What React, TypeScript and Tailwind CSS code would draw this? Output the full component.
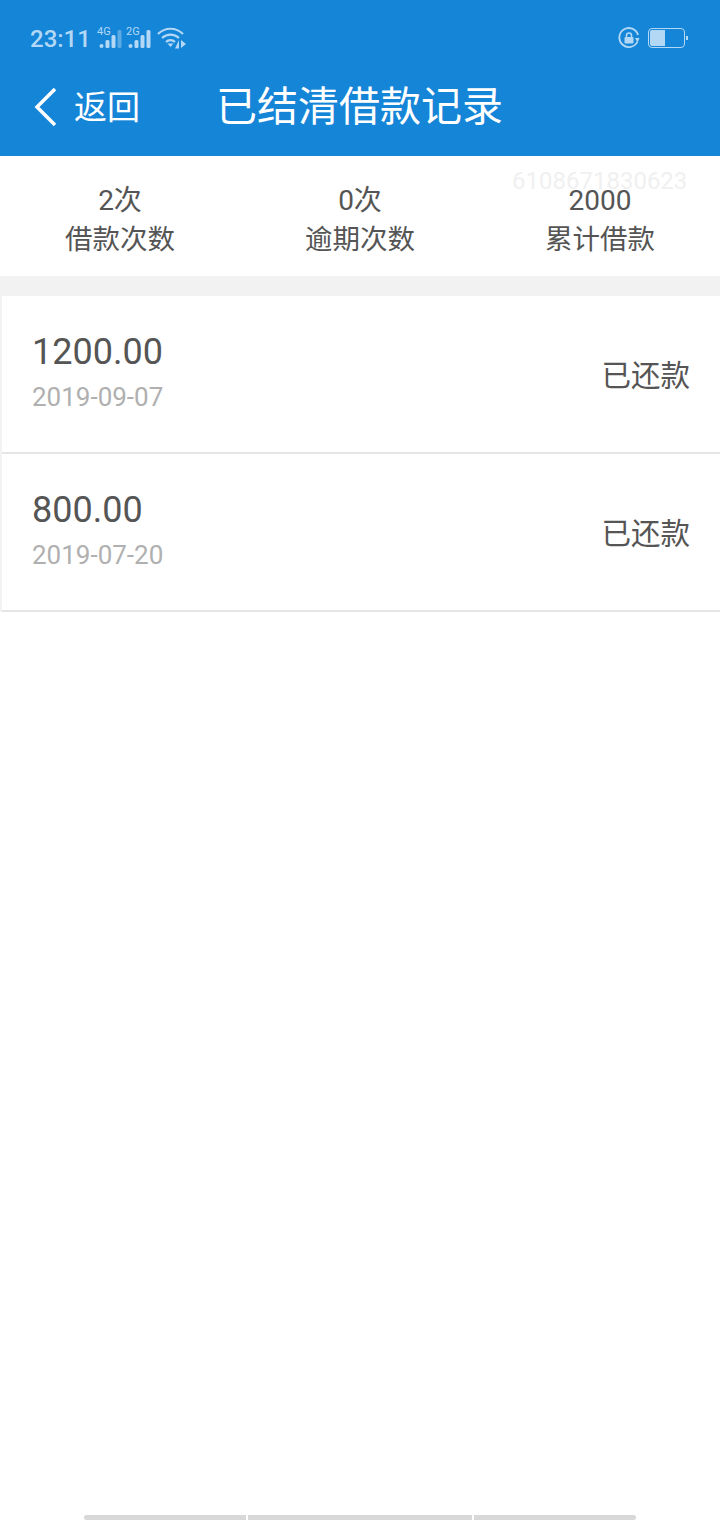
const cjk = "font-['Roboto','Noto_Sans_CJK_SC',sans-serif]";

const stats = [
  { value: '2次', label: '借款次数' },
  { value: '0次', label: '逾期次数' },
  { value: '2000', label: '累计借款' },
];

const records = [
  { amount: '1200.00', date: '2019-09-07' },
  { amount: '800.00', date: '2019-07-20' },
];

function Signal({ label, dim }: { label: string; dim?: boolean }) {
  return (
    <svg width="24" height="22" viewBox="0 0 24 22" className="overflow-visible text-[#b3d8f5]">
      <text x="-2" y="8" fontSize="11" fill="currentColor" fontFamily="Roboto, sans-serif">
        {label}
      </text>
      <circle cx="2.5" cy="19" r="2" fill="currentColor" />
      <rect x="6.5" y="13" width="4" height="8" rx="1.5" fill="currentColor" />
      <rect x="12.5" y="8" width="4" height="13" rx="1.5" fill="currentColor" />
      <rect x="18.5" y="3" width="4" height="18" rx="1.5" fill="currentColor" opacity={dim ? 0.45 : 1} />
    </svg>
  );
}

function Wifi() {
  return (
    <svg width="29" height="22" viewBox="0 0 29 22" fill="none" stroke="#b3d8f5" strokeWidth="2.2">
      <path d="M1 7 C8 0 19 0 26 7" />
      <path d="M5 11 C10 6.5 17 6.5 22 11" />
      <path d="M9 15 C11.5 12.5 15.5 12.5 18 15" />
      <path d="M10.5 16.5 L16.5 16.5 L13.5 20 Z" fill="#b3d8f5" stroke="none" />
      <path d="M22 13 L22 21.5 L18 21.5 Z" fill="#b3d8f5" stroke="none" />
      <path d="M24 13 L24 21 L29 17 Z" fill="#b3d8f5" stroke="none" />
    </svg>
  );
}

function RotationLock() {
  return (
    <svg width="22" height="22" viewBox="0 0 22 22" fill="none">
      <path d="M19.5 14.5 A9.5 9.5 0 1 1 20 8" stroke="#b3d8f5" strokeWidth="1.8" />
      <path d="M17 11 L21.5 11 L19.5 15.5 Z" fill="#b3d8f5" />
      <rect x="6.5" y="10" width="9" height="6.5" rx="1" fill="#b3d8f5" />
      <path d="M8.5 10 V8.5 A2.5 2.5 0 0 1 13.5 8.5 V10" stroke="#b3d8f5" strokeWidth="1.5" />
    </svg>
  );
}

function Battery() {
  return (
    <div className="flex items-center gap-[1px]">
      <div className="h-[20px] w-[37px] rounded-[4px] border border-[#b3d8f5] p-[1px]">
        <div className="h-full w-[15px] rounded-l-[2px] bg-[#b3d8f5]" />
      </div>
      <div className="h-[4px] w-[2px] bg-[#b3d8f5]" />
    </div>
  );
}

export default function App() {
  return (
    <div className={`relative flex h-[1520px] w-[720px] flex-col overflow-hidden bg-white ${cjk}`}>
      <header className="h-[156px] bg-[#1585d8]">
        <div className="flex h-[76px] items-center justify-between pl-[30px] pr-[32px]">
          <div className="flex items-center">
            <span className="relative top-[1px] mr-[8px] text-[24px] font-medium text-[#b3d8f5]">23:11</span>
            <Signal label="4G" dim />
            <span className="w-[5px]" />
            <Signal label="2G" />
            <span className="w-[5px]" />
            <Wifi />
          </div>
          <div className="flex items-center gap-[8px]">
            <RotationLock />
            <Battery />
          </div>
        </div>
        <div className="flex h-[64px] items-center">
          <svg width="24" height="40" viewBox="0 0 24 40" className="relative top-[-1px] ml-[34px]" fill="none" stroke="#fff" strokeWidth="3.5">
            <path d="M21 2 L3 20 L21 38" />
          </svg>
          <span className="ml-[16px] text-[33px] text-white">返回</span>
          <span className="ml-[76px] text-[41px] text-white">已结清借款记录</span>
        </div>
      </header>

      <section className="relative flex h-[120px] bg-white pt-[27px]">
        <span className="absolute left-[512px] top-[7px] text-[24px] text-[#f0f0f0]">6108671830623</span>
        {stats.map((s) => (
          <div key={s.label} className="relative flex-1 text-center text-[#555555]">
            <div className="text-[28px] leading-[36px]">{s.value}</div>
            <div className="text-[27.5px] leading-[42px]">{s.label}</div>
          </div>
        ))}
      </section>

      <div className="h-[20px] bg-[#f2f2f2]" />

      <ul className="border-l-2 border-[#f2f2f2]">
        {records.map((r) => (
          <li key={r.date} className="flex h-[158px] items-center justify-between border-b-2 border-[#e5e5e5] pl-[30px] pr-[30px]">
            <div className="relative">
              <div className="relative top-[-3px] text-[36px] leading-[44px] text-[#555555]">{r.amount}</div>
              <div className="mt-[2px] text-[26px] leading-[36px] text-[#b0b0b0]">{r.date}</div>
            </div>
            <span className="relative top-[2px] text-[29.5px] text-[#555555]">已还款</span>
          </li>
        ))}
      </ul>

      <div className="absolute bottom-0 left-[84px] flex h-[5px] gap-[2px]">
        <div className="w-[162px] rounded-l-full bg-[#d8d8d8]" />
        <div className="w-[224px] bg-[#d8d8d8]" />
        <div className="w-[162px] rounded-r-full bg-[#d8d8d8]" />
      </div>
    </div>
  );
}
